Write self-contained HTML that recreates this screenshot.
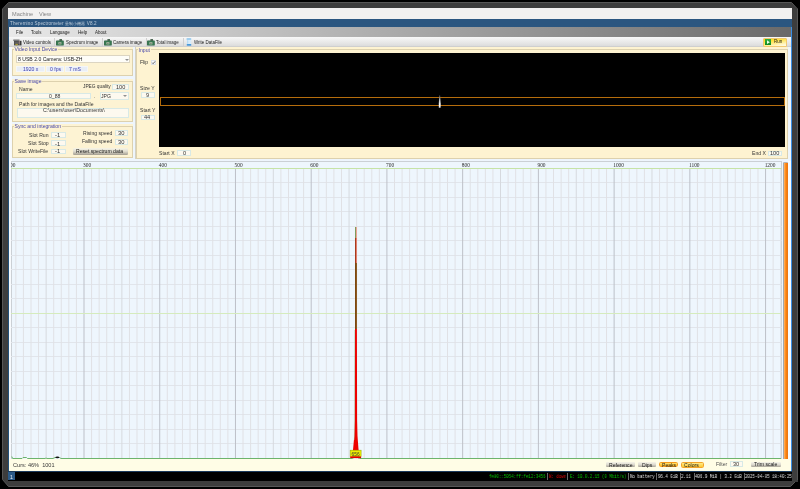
<!DOCTYPE html>
<html><head><meta charset="utf-8">
<style>
*{margin:0;padding:0;box-sizing:border-box}
html,body{width:800px;height:489px;overflow:hidden;background:#000}
body{position:relative;font-family:"Liberation Sans",sans-serif}
.a{position:absolute}
.t{position:absolute;white-space:pre;line-height:10px;height:10px;font-family:"Liberation Sans",sans-serif;will-change:transform}
.frame{left:2px;top:2px;width:796px;height:485px;background:#3d3d3d;
 clip-path:polygon(6px 0,790px 0,796px 7px,796px 478px,789px 485px,7px 485px,0 478px,0 7px)}
.vm{font-size:5.6px;color:#858585}
.ttl{font-size:4.6px;color:#bccbd9;letter-spacing:0.13px}
.p{font-size:5.1px;color:#333}
.m{font-size:4.45px;color:#1c1c1c}
.lbl{color:#4646aa;padding:0 0.6px}
.inp{position:absolute;background:#fdf9ef;border:0.8px solid #d8e9e6}
.tb{font-family:"Liberation Mono",monospace;font-size:5.2px;transform:scaleX(0.79);transform-origin:0 50%}
</style></head><body>
<svg class="a" style="left:0;top:0" width="800" height="489"><polygon points="8.5,2.5 791.5,2.5 797.5,9 797.5,479.5 790.5,486.5 8.5,486.5 2.5,479.5 2.5,9" fill="#3d3d3d" stroke="#575757" stroke-width="1"/></svg>
<div class="a" style="left:8px;top:8px;width:784px;height:11px;background:#f2f1f0"></div>
<div class="t vm" style="left:11.50px;top:8.80px;">Machine</div>
<div class="t vm" style="left:39.10px;top:8.80px;">View</div>
<div class="a" style="left:8px;top:19px;width:784px;height:8px;background:#2b5680"></div>
<div class="t ttl" style="left:9.60px;top:18.50px;">Theremino Spectrometer <span style="font-size:4.2px;letter-spacing:0.05px">量制小機器</span> V8.2</div>
<div class="a" style="left:8px;top:27px;width:784px;height:444px;background:#eef5fc"></div>
<div class="a" style="left:9px;top:47px;width:2.5px;height:424px;background:#f7fafd"></div>
<div class="a" style="left:8px;top:27px;width:1px;height:444px;background:#22507a"></div>
<div class="a" style="left:791px;top:27px;width:1px;height:444px;background:#3a8fe6"></div>
<div class="a" style="left:9px;top:27px;width:782px;height:10px;background:linear-gradient(90deg,#e9e9e9,#6a6a6a)"></div>
<div class="t m" style="left:15.70px;top:28.10px;">File</div>
<div class="t m" style="left:31.00px;top:28.10px;">Tools</div>
<div class="t m" style="left:49.70px;top:28.10px;">Language</div>
<div class="t m" style="left:77.80px;top:28.10px;">Help</div>
<div class="t m" style="left:94.80px;top:28.10px;">About</div>
<div class="a" style="left:9px;top:37px;width:782px;height:9.5px;background:linear-gradient(#f8f8f8,#e6e6e6 60%,#d8d8d8)"></div>
<div class="a" style="left:9px;top:46px;width:782px;height:0.7px;background:#cfcfcf"></div>
<svg class="a" style="left:12.8px;top:38.6px" width="9" height="7" viewBox="0 0 9 7"><rect x="0.3" y="0.5" width="6.2" height="1.6" fill="#7a7a7a"/><rect x="1" y="2" width="5.6" height="4.4" fill="#4a4a4a"/><rect x="1.6" y="2.6" width="4.2" height="2.4" fill="#5e5e5e"/><rect x="6.6" y="1.8" width="1.9" height="4.6" fill="#3c3c3c"/><ellipse cx="3.6" cy="5.6" rx="1.5" ry="0.8" fill="#a89838"/><rect x="5.9" y="1.8" width="0.5" height="3" fill="#c89090"/></svg>
<div class="t m" style="left:22.90px;top:37.70px;">Video controls</div>
<div class="a" style="left:54px;top:38px;width:0.8px;height:8px;background:#d0d0d0"></div>
<svg class="a" style="left:56.4px;top:38.5px" width="8" height="7" viewBox="0 0 8 7"><rect x="0.1" y="1.5" width="7.6" height="5" rx="0.5" fill="#2b6040"/><rect x="0.6" y="2" width="6.6" height="4" fill="#387852"/><rect x="3.4" y="0.2" width="2.6" height="1.5" fill="#2a4a32"/><rect x="2.4" y="3.2" width="3" height="2.2" fill="#b8c4b0"/><rect x="3.2" y="3.8" width="1.4" height="1.2" fill="#6a806a"/></svg>
<div class="t m" style="left:66.00px;top:37.70px;">Spectrum image</div>
<div class="a" style="left:101.5px;top:38px;width:0.8px;height:8px;background:#d0d0d0"></div>
<svg class="a" style="left:103.6px;top:38.5px" width="8" height="7" viewBox="0 0 8 7"><rect x="0.1" y="1.5" width="7.6" height="5" rx="0.5" fill="#2b6040"/><rect x="0.6" y="2" width="6.6" height="4" fill="#387852"/><rect x="3.4" y="0.2" width="2.6" height="1.5" fill="#2a4a32"/><rect x="2.4" y="3.2" width="3" height="2.2" fill="#b8c4b0"/><rect x="3.2" y="3.8" width="1.4" height="1.2" fill="#6a806a"/></svg>
<div class="t m" style="left:112.70px;top:37.70px;">Camera image</div>
<div class="a" style="left:145.6px;top:38px;width:0.8px;height:8px;background:#d0d0d0"></div>
<svg class="a" style="left:147.2px;top:38.5px" width="8" height="7" viewBox="0 0 8 7"><rect x="0.1" y="1.5" width="7.6" height="5" rx="0.5" fill="#2b6040"/><rect x="0.6" y="2" width="6.6" height="4" fill="#387852"/><rect x="3.4" y="0.2" width="2.6" height="1.5" fill="#2a4a32"/><rect x="2.4" y="3.2" width="3" height="2.2" fill="#b8c4b0"/><rect x="3.2" y="3.8" width="1.4" height="1.2" fill="#6a806a"/></svg>
<div class="t m" style="left:156.00px;top:37.70px;">Total image</div>
<div class="a" style="left:183px;top:38px;width:0.8px;height:8px;background:#d0d0d0"></div>
<svg class="a" style="left:185.5px;top:38.2px" width="6" height="8" viewBox="0 0 6 8"><rect x="0.8" y="0.6" width="4.4" height="6.8" rx="0.8" fill="#d8ecfa"/><rect x="0.4" y="0.2" width="5" height="1.5" rx="0.75" fill="#8cc4ec"/><rect x="0.6" y="6.1" width="4.8" height="1.6" rx="0.8" fill="#4a98d8"/><rect x="1.2" y="2.2" width="1" height="3.6" fill="#b0d8f4"/></svg>
<div class="t m" style="left:193.60px;top:37.70px;">Write DataFile</div>
<div class="a" style="left:763px;top:37.5px;width:24px;height:9px;background:linear-gradient(170deg,#ffd500,#ffe866 45%,#fff6c8 80%,#fffbe6);border:1px solid #f0c870;border-radius:1px"></div>
<div class="a" style="left:764.8px;top:38.9px;width:6.4px;height:6.3px;background:linear-gradient(#2fb040,#108a20)"></div>
<svg class="a" style="left:764.8px;top:38.9px" width="6.4" height="6.3" viewBox="0 0 6.4 6.3"><path d="M2 1.2 L4.9 3.15 L2 5.1 Z" fill="#eaffea"/></svg>
<div class="t m" style="left:773.50px;top:36.80px;">Run</div>
<div class="a" style="left:11.5px;top:46.6px;width:121.5px;height:29.4px;background:#fdf3d3"></div><div class="a" style="left:12px;top:49px;width:121px;height:27px;border:1px solid #ddd1ae"></div><div class="t p lbl" style="left:14.30px;top:47.00px;height:5px;line-height:5px;background:#fdf3d3">Video Input Device</div>
<div class="a" style="left:16px;top:55px;width:114px;height:8.4px;background:#fefdf8;border:1px solid #dcd5c2"></div>
<div class="t p" style="left:17.60px;top:54.00px;color:#202020">8 USB 2.0 Camera: USB-ZH</div>
<div class="a" style="left:124.6px;top:58.6px;width:0px;height:0px;border-top:2.2px solid #909090;border-left:2.2px solid transparent;border-right:2.2px solid transparent"></div>
<div class="a" style="left:16px;top:66px;width:29px;height:6px;background:#e9eef6;border:0.5px solid #f4f6f8"></div>
<div class="t p" style="left:22.50px;top:64.10px;color:#3c3cae">1920 x</div>
<div class="a" style="left:46px;top:66px;width:18px;height:6px;background:#e9eef6;border:0.5px solid #f4f6f8"></div>
<div class="t p" style="left:49.50px;top:64.10px;color:#3c3cae">0 fps</div>
<div class="a" style="left:65px;top:66px;width:22.5px;height:6px;background:#e9eef6;border:0.5px solid #f4f6f8"></div>
<div class="t p" style="left:69.00px;top:64.10px;color:#3c3cae">7 mS</div>
<div class="a" style="left:11.5px;top:78.6px;width:121.5px;height:43.0px;background:#fdf3d3"></div><div class="a" style="left:12px;top:81px;width:121px;height:41px;border:1px solid #ddd1ae"></div><div class="t p lbl" style="left:14.30px;top:78.60px;height:5px;line-height:5px;background:#fdf3d3">Save image</div>
<div class="t p" style="left:19.00px;top:84.40px;">Name</div>
<div class="t p" style="right:689.50px;top:81.90px;font-size:4.8px">JPEG quality</div>
<div class="inp" style="left:111.5px;top:83.6px;width:17.30000000000001px;height:6.6000000000000085px;"></div>
<div class="t p" style="right:674.80px;top:82.10px;font-size:5.6px">100</div>
<div class="inp" style="left:16.2px;top:92.9px;width:75.0px;height:5.799999999999997px;"></div>
<div class="t p" style="left:48.60px;top:90.60px;">0_88</div>
<div class="t p" style="left:94.00px;top:91.20px;">.</div>
<div class="inp" style="left:99.5px;top:92px;width:29.69999999999999px;height:7.700000000000003px;"></div>
<div class="t p" style="left:100.80px;top:90.90px;">JPG</div>
<div class="a" style="left:123.4px;top:95.2px;width:0px;height:0px;border-top:2.2px solid #909090;border-left:2.2px solid transparent;border-right:2.2px solid transparent"></div>
<div class="t p" style="left:19.00px;top:99.10px;">Path for images and the DataFile</div>
<div class="inp" style="left:17.2px;top:107.6px;width:111.99999999999999px;height:10.200000000000003px;"></div>
<div class="t p" style="left:43.00px;top:105.40px;font-size:5.35px">C:\users\user\Documents\</div>
<div class="a" style="left:11.5px;top:123.6px;width:121.5px;height:34.80000000000001px;background:#fdf3d3"></div><div class="a" style="left:12px;top:126px;width:121px;height:32px;border:1px solid #ddd1ae"></div><div class="t p lbl" style="left:14.30px;top:123.50px;height:5px;line-height:5px;background:#fdf3d3">Sync and integration</div>
<div class="t p" style="right:751.25px;top:130.20px;">Slot Run</div>
<div class="inp" style="left:51.2px;top:131.8px;width:14.399999999999991px;height:6.199999999999989px;"></div>
<div class="t p" style="left:55.30px;top:130.40px;font-size:5.8px">-1</div>
<div class="t p" style="right:751.50px;top:138.30px;">Slot Stop</div>
<div class="inp" style="left:51.2px;top:140.2px;width:14.399999999999991px;height:6.300000000000011px;"></div>
<div class="t p" style="left:55.30px;top:138.50px;font-size:5.8px">-1</div>
<div class="t p" style="right:751.70px;top:146.20px;">Slot WriteFile</div>
<div class="inp" style="left:51.2px;top:148.6px;width:14.399999999999991px;height:5.900000000000006px;"></div>
<div class="t p" style="left:55.30px;top:146.40px;font-size:5.8px">-1</div>
<div class="t p" style="right:688.00px;top:128.30px;">Rising speed</div>
<div class="inp" style="left:115px;top:130.4px;width:12.5px;height:5.799999999999983px;"></div>
<div class="t p" style="left:118.20px;top:128.40px;font-size:5.8px">30</div>
<div class="t p" style="right:688.00px;top:136.40px;">Falling speed</div>
<div class="inp" style="left:115px;top:138.5px;width:12.5px;height:6.0px;"></div>
<div class="t p" style="left:118.20px;top:136.50px;font-size:5.8px">30</div>
<div class="a" style="left:72.7px;top:148.2px;width:55px;height:6.6px;background:linear-gradient(#f6f4e6,#e2dfd2 45%,#a39d90);border-radius:1.2px"></div>
<div class="t p" style="left:75.80px;top:146.20px;color:#151515">Reset spectrum data</div>
<div class="a" style="left:135.6px;top:46.6px;width:652.4px;height:112.0px;background:#fef3d1"></div><div class="a" style="left:136px;top:49px;width:652px;height:110px;border:1px solid #ddd1ae"></div><div class="t p lbl" style="left:138.30px;top:47.80px;height:5px;line-height:5px;background:#fef3d1">Input</div>
<div class="a" style="left:135px;top:46.6px;width:1px;height:112px;background:#d4d2c6"></div>
<div class="t p" style="left:139.90px;top:57.20px;">Flip</div>
<div class="a" style="left:151px;top:59.8px;width:5px;height:4.8px;background:#f9fafb;border:0.5px solid #dde2e8"></div>
<svg class="a" style="left:151.2px;top:59.8px" width="5" height="5" viewBox="0 0 5 5"><path d="M1.3 2.7 L2.1 3.7 L4.1 1.4" fill="none" stroke="#585858" stroke-width="0.95"/></svg>
<div class="t p" style="left:140.00px;top:83.30px;">Size Y</div>
<div class="inp" style="left:140.5px;top:92.2px;width:14.5px;height:5.5px;"></div>
<div class="t p" style="left:146.00px;top:90.10px;font-size:5.6px">9</div>
<div class="t p" style="left:140.00px;top:105.00px;">Start Y</div>
<div class="inp" style="left:140.5px;top:114.6px;width:14.5px;height:5.1000000000000085px;"></div>
<div class="t p" style="left:144.20px;top:112.30px;font-size:5.6px">44</div>
<div class="a" style="left:159.3px;top:52.7px;width:626px;height:94px;background:#000"></div>
<div class="a" style="left:160px;top:96.8px;width:625.3px;height:9.5px;border:1.3px solid #b56d0c;border-left-width:1.8px;border-right-width:1.4px"></div>
<svg class="a" style="left:436px;top:94px" width="8" height="16" viewBox="436 94 8 16"><defs><linearGradient id="ws" x1="0" y1="0" x2="0" y2="1"><stop offset="0" stop-color="#444"/><stop offset="0.35" stop-color="#bbb"/><stop offset="0.75" stop-color="#fff"/><stop offset="1" stop-color="#ddd"/></linearGradient></defs><polygon points="439.3,95.3 440.1,95.3 440.7,103.5 440.6,107.8 438.8,107.8 438.8,103.5" fill="url(#ws)"/></svg>
<div class="t p" style="left:159.20px;top:148.40px;">Start X</div>
<div class="inp" style="left:177px;top:150.2px;width:14.400000000000006px;height:5.800000000000011px;"></div>
<div class="t p" style="left:182.60px;top:148.30px;font-size:5.6px">0</div>
<div class="t p" style="right:33.80px;top:148.20px;">End X</div>
<div class="inp" style="left:768px;top:150.6px;width:14.399999999999977px;height:5.300000000000011px;"></div>
<div class="t p" style="left:770.20px;top:148.40px;font-size:5.6px">100</div>
<div class="a" style="left:11px;top:161px;width:771px;height:298px;background:#eef6fd;border:1px solid #cbd0d5;border-bottom:none"></div>
<svg class="a" style="left:11px;top:161px;overflow:hidden;will-change:transform" width="770.5" height="298" viewBox="0 0 770.5 298" font-family="Liberation Serif" font-size="5.4" fill="#2a2a2a"><line x1="0" y1="21.50" x2="770.50" y2="21.50" stroke="#e1e5eb" stroke-width="1"/>
<line x1="0" y1="36.50" x2="770.50" y2="36.50" stroke="#e1e5eb" stroke-width="1"/>
<line x1="0" y1="50.50" x2="770.50" y2="50.50" stroke="#e1e5eb" stroke-width="1"/>
<line x1="0" y1="65.50" x2="770.50" y2="65.50" stroke="#e1e5eb" stroke-width="1"/>
<line x1="0" y1="79.50" x2="770.50" y2="79.50" stroke="#e1e5eb" stroke-width="1"/>
<line x1="0" y1="94.50" x2="770.50" y2="94.50" stroke="#e1e5eb" stroke-width="1"/>
<line x1="0" y1="108.50" x2="770.50" y2="108.50" stroke="#e1e5eb" stroke-width="1"/>
<line x1="0" y1="123.50" x2="770.50" y2="123.50" stroke="#e1e5eb" stroke-width="1"/>
<line x1="0" y1="137.50" x2="770.50" y2="137.50" stroke="#e1e5eb" stroke-width="1"/>
<line x1="0" y1="166.50" x2="770.50" y2="166.50" stroke="#e1e5eb" stroke-width="1"/>
<line x1="0" y1="181.50" x2="770.50" y2="181.50" stroke="#e1e5eb" stroke-width="1"/>
<line x1="0" y1="195.50" x2="770.50" y2="195.50" stroke="#e1e5eb" stroke-width="1"/>
<line x1="0" y1="210.50" x2="770.50" y2="210.50" stroke="#e1e5eb" stroke-width="1"/>
<line x1="0" y1="224.50" x2="770.50" y2="224.50" stroke="#e1e5eb" stroke-width="1"/>
<line x1="0" y1="239.50" x2="770.50" y2="239.50" stroke="#e1e5eb" stroke-width="1"/>
<line x1="0" y1="253.50" x2="770.50" y2="253.50" stroke="#e1e5eb" stroke-width="1"/>
<line x1="0" y1="268.50" x2="770.50" y2="268.50" stroke="#e1e5eb" stroke-width="1"/>
<line x1="0" y1="282.50" x2="770.50" y2="282.50" stroke="#e1e5eb" stroke-width="1"/>
<line x1="4.84" y1="7.50" x2="4.84" y2="297.50" stroke="#e0e1e5" stroke-width="1"/>
<line x1="12.42" y1="7.50" x2="12.42" y2="297.50" stroke="#e0e1e5" stroke-width="1"/>
<line x1="19.99" y1="7.50" x2="19.99" y2="297.50" stroke="#e0e1e5" stroke-width="1"/>
<line x1="27.56" y1="7.50" x2="27.56" y2="297.50" stroke="#e0e1e5" stroke-width="1"/>
<line x1="42.71" y1="7.50" x2="42.71" y2="297.50" stroke="#e0e1e5" stroke-width="1"/>
<line x1="50.28" y1="7.50" x2="50.28" y2="297.50" stroke="#e0e1e5" stroke-width="1"/>
<line x1="57.85" y1="7.50" x2="57.85" y2="297.50" stroke="#e0e1e5" stroke-width="1"/>
<line x1="65.43" y1="7.50" x2="65.43" y2="297.50" stroke="#e0e1e5" stroke-width="1"/>
<line x1="80.57" y1="7.50" x2="80.57" y2="297.50" stroke="#e0e1e5" stroke-width="1"/>
<line x1="88.15" y1="7.50" x2="88.15" y2="297.50" stroke="#e0e1e5" stroke-width="1"/>
<line x1="95.72" y1="7.50" x2="95.72" y2="297.50" stroke="#e0e1e5" stroke-width="1"/>
<line x1="103.29" y1="7.50" x2="103.29" y2="297.50" stroke="#e0e1e5" stroke-width="1"/>
<line x1="118.44" y1="7.50" x2="118.44" y2="297.50" stroke="#e0e1e5" stroke-width="1"/>
<line x1="126.01" y1="7.50" x2="126.01" y2="297.50" stroke="#e0e1e5" stroke-width="1"/>
<line x1="133.58" y1="7.50" x2="133.58" y2="297.50" stroke="#e0e1e5" stroke-width="1"/>
<line x1="141.16" y1="7.50" x2="141.16" y2="297.50" stroke="#e0e1e5" stroke-width="1"/>
<line x1="156.30" y1="7.50" x2="156.30" y2="297.50" stroke="#e0e1e5" stroke-width="1"/>
<line x1="163.88" y1="7.50" x2="163.88" y2="297.50" stroke="#e0e1e5" stroke-width="1"/>
<line x1="171.45" y1="7.50" x2="171.45" y2="297.50" stroke="#e0e1e5" stroke-width="1"/>
<line x1="179.02" y1="7.50" x2="179.02" y2="297.50" stroke="#e0e1e5" stroke-width="1"/>
<line x1="194.17" y1="7.50" x2="194.17" y2="297.50" stroke="#e0e1e5" stroke-width="1"/>
<line x1="201.74" y1="7.50" x2="201.74" y2="297.50" stroke="#e0e1e5" stroke-width="1"/>
<line x1="209.31" y1="7.50" x2="209.31" y2="297.50" stroke="#e0e1e5" stroke-width="1"/>
<line x1="216.89" y1="7.50" x2="216.89" y2="297.50" stroke="#e0e1e5" stroke-width="1"/>
<line x1="232.03" y1="7.50" x2="232.03" y2="297.50" stroke="#e0e1e5" stroke-width="1"/>
<line x1="239.61" y1="7.50" x2="239.61" y2="297.50" stroke="#e0e1e5" stroke-width="1"/>
<line x1="247.18" y1="7.50" x2="247.18" y2="297.50" stroke="#e0e1e5" stroke-width="1"/>
<line x1="254.75" y1="7.50" x2="254.75" y2="297.50" stroke="#e0e1e5" stroke-width="1"/>
<line x1="269.90" y1="7.50" x2="269.90" y2="297.50" stroke="#e0e1e5" stroke-width="1"/>
<line x1="277.47" y1="7.50" x2="277.47" y2="297.50" stroke="#e0e1e5" stroke-width="1"/>
<line x1="285.04" y1="7.50" x2="285.04" y2="297.50" stroke="#e0e1e5" stroke-width="1"/>
<line x1="292.62" y1="7.50" x2="292.62" y2="297.50" stroke="#e0e1e5" stroke-width="1"/>
<line x1="307.76" y1="7.50" x2="307.76" y2="297.50" stroke="#e0e1e5" stroke-width="1"/>
<line x1="315.34" y1="7.50" x2="315.34" y2="297.50" stroke="#e0e1e5" stroke-width="1"/>
<line x1="322.91" y1="7.50" x2="322.91" y2="297.50" stroke="#e0e1e5" stroke-width="1"/>
<line x1="330.48" y1="7.50" x2="330.48" y2="297.50" stroke="#e0e1e5" stroke-width="1"/>
<line x1="345.63" y1="7.50" x2="345.63" y2="297.50" stroke="#e0e1e5" stroke-width="1"/>
<line x1="353.20" y1="7.50" x2="353.20" y2="297.50" stroke="#e0e1e5" stroke-width="1"/>
<line x1="360.77" y1="7.50" x2="360.77" y2="297.50" stroke="#e0e1e5" stroke-width="1"/>
<line x1="368.35" y1="7.50" x2="368.35" y2="297.50" stroke="#e0e1e5" stroke-width="1"/>
<line x1="383.49" y1="7.50" x2="383.49" y2="297.50" stroke="#e0e1e5" stroke-width="1"/>
<line x1="391.07" y1="7.50" x2="391.07" y2="297.50" stroke="#e0e1e5" stroke-width="1"/>
<line x1="398.64" y1="7.50" x2="398.64" y2="297.50" stroke="#e0e1e5" stroke-width="1"/>
<line x1="406.21" y1="7.50" x2="406.21" y2="297.50" stroke="#e0e1e5" stroke-width="1"/>
<line x1="421.36" y1="7.50" x2="421.36" y2="297.50" stroke="#e0e1e5" stroke-width="1"/>
<line x1="428.93" y1="7.50" x2="428.93" y2="297.50" stroke="#e0e1e5" stroke-width="1"/>
<line x1="436.50" y1="7.50" x2="436.50" y2="297.50" stroke="#e0e1e5" stroke-width="1"/>
<line x1="444.08" y1="7.50" x2="444.08" y2="297.50" stroke="#e0e1e5" stroke-width="1"/>
<line x1="459.22" y1="7.50" x2="459.22" y2="297.50" stroke="#e0e1e5" stroke-width="1"/>
<line x1="466.80" y1="7.50" x2="466.80" y2="297.50" stroke="#e0e1e5" stroke-width="1"/>
<line x1="474.37" y1="7.50" x2="474.37" y2="297.50" stroke="#e0e1e5" stroke-width="1"/>
<line x1="481.94" y1="7.50" x2="481.94" y2="297.50" stroke="#e0e1e5" stroke-width="1"/>
<line x1="497.09" y1="7.50" x2="497.09" y2="297.50" stroke="#e0e1e5" stroke-width="1"/>
<line x1="504.66" y1="7.50" x2="504.66" y2="297.50" stroke="#e0e1e5" stroke-width="1"/>
<line x1="512.23" y1="7.50" x2="512.23" y2="297.50" stroke="#e0e1e5" stroke-width="1"/>
<line x1="519.81" y1="7.50" x2="519.81" y2="297.50" stroke="#e0e1e5" stroke-width="1"/>
<line x1="534.95" y1="7.50" x2="534.95" y2="297.50" stroke="#e0e1e5" stroke-width="1"/>
<line x1="542.53" y1="7.50" x2="542.53" y2="297.50" stroke="#e0e1e5" stroke-width="1"/>
<line x1="550.10" y1="7.50" x2="550.10" y2="297.50" stroke="#e0e1e5" stroke-width="1"/>
<line x1="557.67" y1="7.50" x2="557.67" y2="297.50" stroke="#e0e1e5" stroke-width="1"/>
<line x1="572.82" y1="7.50" x2="572.82" y2="297.50" stroke="#e0e1e5" stroke-width="1"/>
<line x1="580.39" y1="7.50" x2="580.39" y2="297.50" stroke="#e0e1e5" stroke-width="1"/>
<line x1="587.96" y1="7.50" x2="587.96" y2="297.50" stroke="#e0e1e5" stroke-width="1"/>
<line x1="595.54" y1="7.50" x2="595.54" y2="297.50" stroke="#e0e1e5" stroke-width="1"/>
<line x1="610.68" y1="7.50" x2="610.68" y2="297.50" stroke="#e0e1e5" stroke-width="1"/>
<line x1="618.26" y1="7.50" x2="618.26" y2="297.50" stroke="#e0e1e5" stroke-width="1"/>
<line x1="625.83" y1="7.50" x2="625.83" y2="297.50" stroke="#e0e1e5" stroke-width="1"/>
<line x1="633.40" y1="7.50" x2="633.40" y2="297.50" stroke="#e0e1e5" stroke-width="1"/>
<line x1="648.55" y1="7.50" x2="648.55" y2="297.50" stroke="#e0e1e5" stroke-width="1"/>
<line x1="656.12" y1="7.50" x2="656.12" y2="297.50" stroke="#e0e1e5" stroke-width="1"/>
<line x1="663.69" y1="7.50" x2="663.69" y2="297.50" stroke="#e0e1e5" stroke-width="1"/>
<line x1="671.27" y1="7.50" x2="671.27" y2="297.50" stroke="#e0e1e5" stroke-width="1"/>
<line x1="686.41" y1="7.50" x2="686.41" y2="297.50" stroke="#e0e1e5" stroke-width="1"/>
<line x1="693.99" y1="7.50" x2="693.99" y2="297.50" stroke="#e0e1e5" stroke-width="1"/>
<line x1="701.56" y1="7.50" x2="701.56" y2="297.50" stroke="#e0e1e5" stroke-width="1"/>
<line x1="709.13" y1="7.50" x2="709.13" y2="297.50" stroke="#e0e1e5" stroke-width="1"/>
<line x1="724.28" y1="7.50" x2="724.28" y2="297.50" stroke="#e0e1e5" stroke-width="1"/>
<line x1="731.85" y1="7.50" x2="731.85" y2="297.50" stroke="#e0e1e5" stroke-width="1"/>
<line x1="739.42" y1="7.50" x2="739.42" y2="297.50" stroke="#e0e1e5" stroke-width="1"/>
<line x1="747.00" y1="7.50" x2="747.00" y2="297.50" stroke="#e0e1e5" stroke-width="1"/>
<line x1="762.14" y1="7.50" x2="762.14" y2="297.50" stroke="#e0e1e5" stroke-width="1"/>
<line x1="769.72" y1="7.50" x2="769.72" y2="297.50" stroke="#e0e1e5" stroke-width="1"/>
<line x1="35.13" y1="7.50" x2="35.13" y2="297.50" stroke="#d6d9de" stroke-width="1"/>
<line x1="110.87" y1="7.50" x2="110.87" y2="297.50" stroke="#d6d9de" stroke-width="1"/>
<line x1="186.59" y1="7.50" x2="186.59" y2="297.50" stroke="#d6d9de" stroke-width="1"/>
<line x1="262.32" y1="7.50" x2="262.32" y2="297.50" stroke="#d6d9de" stroke-width="1"/>
<line x1="338.06" y1="7.50" x2="338.06" y2="297.50" stroke="#d6d9de" stroke-width="1"/>
<line x1="413.78" y1="7.50" x2="413.78" y2="297.50" stroke="#d6d9de" stroke-width="1"/>
<line x1="489.51" y1="7.50" x2="489.51" y2="297.50" stroke="#d6d9de" stroke-width="1"/>
<line x1="565.25" y1="7.50" x2="565.25" y2="297.50" stroke="#d6d9de" stroke-width="1"/>
<line x1="640.98" y1="7.50" x2="640.98" y2="297.50" stroke="#d6d9de" stroke-width="1"/>
<line x1="716.70" y1="7.50" x2="716.70" y2="297.50" stroke="#d6d9de" stroke-width="1"/>
<line x1="73.00" y1="7.50" x2="73.00" y2="297.50" stroke="#bdc0c8" stroke-width="1.0"/>
<line x1="148.73" y1="7.50" x2="148.73" y2="297.50" stroke="#bdc0c8" stroke-width="1.0"/>
<line x1="224.46" y1="7.50" x2="224.46" y2="297.50" stroke="#bdc0c8" stroke-width="1.0"/>
<line x1="300.19" y1="7.50" x2="300.19" y2="297.50" stroke="#bdc0c8" stroke-width="1.0"/>
<line x1="375.92" y1="7.50" x2="375.92" y2="297.50" stroke="#bdc0c8" stroke-width="1.0"/>
<line x1="451.65" y1="7.50" x2="451.65" y2="297.50" stroke="#bdc0c8" stroke-width="1.0"/>
<line x1="527.38" y1="7.50" x2="527.38" y2="297.50" stroke="#bdc0c8" stroke-width="1.0"/>
<line x1="603.11" y1="7.50" x2="603.11" y2="297.50" stroke="#bdc0c8" stroke-width="1.0"/>
<line x1="678.84" y1="7.50" x2="678.84" y2="297.50" stroke="#bdc0c8" stroke-width="1.0"/>
<line x1="754.57" y1="7.50" x2="754.57" y2="297.50" stroke="#bdc0c8" stroke-width="1.0"/>
<line x1="0" y1="7.50" x2="770.50" y2="7.50" stroke="#c6e3a6" stroke-width="1"/>
<line x1="0" y1="152.50" x2="770.50" y2="152.50" stroke="#d5ebbd" stroke-width="1"/>
<text x="-3.63" y="5.80">200</text>
<text x="72.10" y="5.80">300</text>
<text x="147.83" y="5.80">400</text>
<text x="223.56" y="5.80">500</text>
<text x="299.29" y="5.80">600</text>
<text x="375.02" y="5.80">700</text>
<text x="450.75" y="5.80">800</text>
<text x="526.48" y="5.80">900</text>
<text x="602.21" y="5.80">1000</text>
<text x="677.94" y="5.80">1100</text>
<text x="753.67" y="5.80">1200</text>
<g transform="translate(-11,-161)"><polyline points="11.8,456.5 12.6,458.5 22,458.5 23,457.5 26.5,457.5 27.5,458.5 45,458.5 46,458 47,458.5 53,458.5 55,457.5 59.5,457.5 61,458.5 352,458.5 354,457.5 357.5,457.5 359.5,458.5 781,458.5" fill="none" stroke="#6cb46c" stroke-width="1"/><ellipse cx="57.4" cy="457.4" rx="2" ry="0.8" fill="#111"/><rect x="355" y="238" width="1" height="25" fill="#a83a1c"/><rect x="355" y="263" width="1" height="66" fill="#7c4810"/><rect x="356" y="238" width="1" height="25" fill="#e08070"/><rect x="356" y="263" width="1" height="66" fill="#8c5a22"/><rect x="355" y="227" width="1" height="11" fill="#7f9c5c"/><rect x="356" y="227" width="1" height="11" fill="#e9a496"/><polygon points="355,329 356.9,329 357.1,420 357.5,436 358.4,448 359.5,458 352,458 353.2,448 354.3,436 354.8,420" fill="#ee0000"/><line x1="354.6" y1="330" x2="354.4" y2="440" stroke="#8fc08f" stroke-width="0.4"/><rect x="350.2" y="450.2" width="10.9" height="6.3" fill="#eef000" stroke="#9ab000" stroke-width="0.6"/><rect x="350.2" y="456.5" width="10.9" height="1.6" fill="#e80000"/><text x="351.6" y="455.5" font-family="Liberation Sans" font-size="4.8" fill="#333">656</text></g></svg>
<div class="a" style="left:788px;top:161px;width:3px;height:298px;background:#f8fbfe"></div>
<div class="a" style="left:783px;top:162px;width:5px;height:296.5px;background:linear-gradient(90deg,#ffb870,#ff9020 35%,#f47a08 70%,#e87418);border-left:1px solid #a4a8ac;border-top:1px solid #b4b4b4;border-radius:1px 1px 0 0"></div>
<div class="a" style="left:9px;top:459px;width:782px;height:12px;background:#fffde6"></div>
<div class="t p" style="left:12.70px;top:460.00px;font-size:5.58px;color:#383838">Curs: 46%  1001</div>
<div class="a" style="left:606.2px;top:461.9px;width:28.899999999999977px;height:5.300000000000011px;background:linear-gradient(#f6f4e8,#dedbd0 50%,#a9a498);border-radius:1px"></div><div class="t p" style="left:609.30px;top:459.60px;color:#202020">Reference</div>
<div class="a" style="left:638.1px;top:461.9px;width:17.600000000000023px;height:5.300000000000011px;background:linear-gradient(#f6f4e8,#dedbd0 50%,#a9a498);border-radius:1px"></div><div class="t p" style="left:641.50px;top:459.60px;color:#202020">Dips</div>
<div class="a" style="left:658.8px;top:461.9px;width:19.2px;height:5.6px;background:linear-gradient(#ffe470,#ffb820);border:0.7px solid #f59818;border-radius:1.6px"></div>
<div class="t p" style="left:662.00px;top:459.60px;color:#202020">Peaks</div>
<div class="a" style="left:681px;top:462px;width:22.8px;height:5.5px;background:linear-gradient(#ffec88,#ffc830);border:0.7px solid #f4a428;border-radius:1.6px"></div>
<div class="t p" style="left:684.00px;top:459.60px;color:#202020">Colors</div>
<div class="t p" style="left:715.50px;top:459.10px;color:#505050">Filter</div>
<div class="inp" style="left:729.8px;top:461px;width:13.400000000000091px;height:5.600000000000023px;"></div>
<div class="t p" style="left:733.10px;top:459.10px;font-size:5.6px">30</div>
<div class="a" style="left:751px;top:461.5px;width:30.399999999999977px;height:5.5px;background:linear-gradient(#f6f4e8,#dedbd0 50%,#a9a498);border-radius:1px"></div><div class="t p" style="left:753.70px;top:459.30px;color:#202020">Trim scale</div>
<div class="a" style="left:8px;top:471px;width:784px;height:1px;background:#1b3a5c"></div>
<div class="a" style="left:8px;top:472px;width:784px;height:9px;background:#000"></div>
<div class="a" style="left:8px;top:472.3px;width:6.8px;height:8px;background:#2b5a88"></div>
<div class="t p" style="left:10.20px;top:471.60px;color:#e8eef4;font-size:5.3px">1</div>
<div class="t tb" style="left:488.80px;top:472.00px;color:#00c800">fe80::5054:ff:fe12:3456</div>
<div class="t tb" style="left:548.80px;top:472.00px;color:#e00000">W: down</div>
<div class="t tb" style="left:570.00px;top:472.00px;color:#00c800">E: 10.0.2.15 (0 Mbit/s)</div>
<div class="t tb" style="left:629.70px;top:472.00px;color:#e4e4e4">No battery</div>
<div class="t tb" style="left:657.80px;top:472.00px;color:#e4e4e4">96.4 GiB</div>
<div class="t tb" style="left:681.40px;top:472.00px;color:#e4e4e4">2.11</div>
<div class="t tb" style="left:694.80px;top:472.00px;color:#e4e4e4">406.9 MiB | 3.2 GiB</div>
<div class="t tb" style="left:744.70px;top:472.00px;color:#e4e4e4">2025-04-05 18:40:25</div>
<div class="a" style="left:546.8px;top:473px;width:0.8px;height:7px;background:#6a6a6a"></div>
<div class="a" style="left:567.3px;top:473px;width:0.8px;height:7px;background:#6a6a6a"></div>
<div class="a" style="left:628px;top:473px;width:0.8px;height:7px;background:#6a6a6a"></div>
<div class="a" style="left:655.9px;top:473px;width:0.8px;height:7px;background:#6a6a6a"></div>
<div class="a" style="left:680.1px;top:473px;width:0.8px;height:7px;background:#6a6a6a"></div>
<div class="a" style="left:693.6px;top:473px;width:0.8px;height:7px;background:#6a6a6a"></div>
<div class="a" style="left:743.7px;top:473px;width:0.8px;height:7px;background:#6a6a6a"></div>
<div class="a" style="left:792px;top:8px;width:6px;height:474px;background:#3d3d3d"></div>
<div class="a" style="left:797px;top:9px;width:1px;height:471px;background:#565656"></div>
<div class="a" style="left:798px;top:0px;width:2px;height:489px;background:#000"></div>
</body></html>
